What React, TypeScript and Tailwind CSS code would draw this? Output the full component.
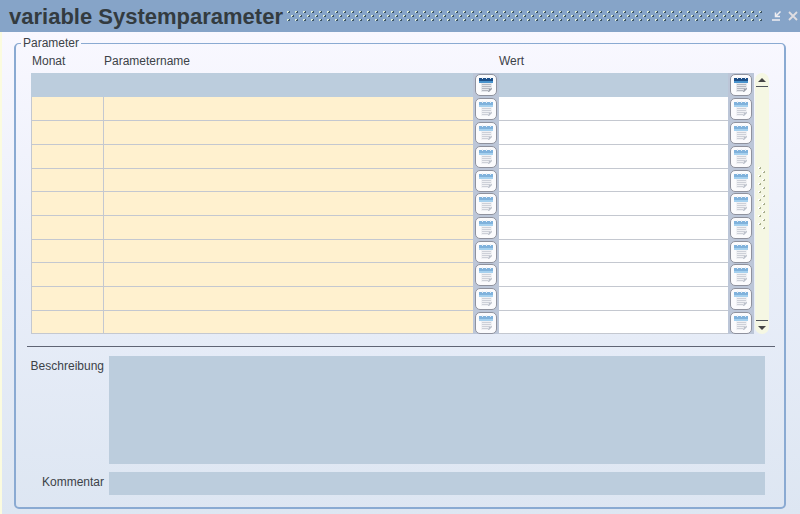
import React from 'react';

const ROW_HEIGHTS = ['h-6', 'h-6', 'h-6', 'h-6', 'h-[23px]', 'h-6', 'h-6', 'h-[23px]', 'h-6', 'h-6', 'h-[23px]'];

const Grip: React.FC<{ id: string; className: string; light: string; dark: string }> = ({
  id,
  className,
  light,
  dark,
}) => (
  <svg className={className} aria-hidden="true" shapeRendering="crispEdges">
    <defs>
      <pattern id={id} width="8" height="8" patternUnits="userSpaceOnUse">
        <path d="M0 0h2v1H1v1H0zM4 4h2v1H5v1H4z" fill={light} />
        <path d="M2 0h1v2H1V1h1zM6 4h1v2H5V5h1z" fill={dark} />
      </pattern>
    </defs>
    <rect width="100%" height="100%" fill={`url(#${id})`} />
  </svg>
);

const ListIcon: React.FC<{ active: boolean }> = ({ active }) => (
  <svg className="shrink-0" width="16" height="16" viewBox="0 0 16 16" aria-hidden="true">
    <path d="M1 1h14v5H1z" fill={active ? '#4a93cc' : '#a5d0ee'} />
    <path d="M1 1h14v3H1z" fill={active ? '#1d4f88' : '#80b2dc'} />
    <path d="M4 0h1v2H4zM8 0h1v2H8zM12 0h1v2h-1z" fill="#e6eef6" />
    <path d="M3 6h11v6l-3 3H3z" fill={active ? '#e6e8ec' : '#f0f1f4'} />
    <path
      d="M4 7.500h9M4 9.500h9M4 11.500h8M4 13.500h6"
      stroke={active ? '#b5b8c1' : '#cdd0d8'}
      fill="none"
    />
    <path d="M14 11v1l-3 3h-1l1-3z" fill={active ? '#999da8' : '#bcc1cb'} />
  </svg>
);

const ListButton: React.FC<{ label: string; active: boolean }> = ({ label, active }) => (
  <button
    type="button"
    aria-label={label}
    className="mx-auto flex h-[22px] w-[22px] items-center justify-center rounded-[5px] border border-[#8f929e] bg-[#fbfbfd]"
  >
    <ListIcon active={active} />
  </button>
);

const TitleBar: React.FC = () => (
  <header className="flex h-8 items-center bg-[#86a4c8] pr-px pl-[9px]">
    <h1 className="pt-0.5 text-[22px] leading-7 font-bold text-[#333b40]">variable Systemparameter</h1>
    <Grip id="title-grip" className="ml-1 h-[10px] min-w-0 flex-1" light="#dcebd9" dark="#3d5566" />
    <button type="button" aria-label="Minimieren" className="ml-2 p-px">
      <svg width="10" height="10" viewBox="0 0 10 10" fill="none" stroke="#efeef2">
        <path d="M8.500 0.500L4 5M3.500 1.500v4H8" strokeWidth="1.500" />
        <path d="M0 9h8" strokeWidth="1.500" />
      </svg>
    </button>
    <button type="button" aria-label="Schließen" className="ml-1 p-px">
      <svg width="10" height="10" viewBox="0 0 10 10" stroke="#dfdde2" strokeWidth="1.800">
        <path d="M1 1l8 8M9 1L1 9" />
      </svg>
    </button>
  </header>
);

const ParameterTable: React.FC = () => (
  <table className="min-w-0 flex-1 table-fixed border-collapse">
    <colgroup>
      <col className="w-[73px]" />
      <col />
      <col className="w-[26px]" />
      <col className="w-[229px]" />
      <col className="w-[26px]" />
    </colgroup>
    <thead>
      <tr className="h-[22px] text-left align-top">
        <th className="pt-0.5 pr-0 pb-1 pl-px font-normal">Monat</th>
        <th className="px-0 pt-0.5 pb-1 font-normal" colSpan={2}>Parametername</th>
        <th className="px-0 pt-0.5 pb-1 font-normal" colSpan={2}>Wert</th>
      </tr>
    </thead>
    <tbody>
      {ROW_HEIGHTS.map((height, i) => {
        const active = i === 0;
        const key = active ? 'bg-[#bccddd] border-[#bccddd]' : 'bg-[#fff1cf] border-[#c4c8d0]';
        const value = active ? 'bg-[#bccddd] border-[#bccddd]' : 'bg-white border-[#c4c8d0]';
        return (
          <tr key={i}>
            <td className="p-0">
              <input aria-label={`Monat ${i + 1}`} className={`block w-full border-r border-b border-l outline-none ${height} ${key}`} />
            </td>
            <td className="p-0">
              <input aria-label={`Parametername ${i + 1}`} className={`block w-full border-b outline-none ${height} ${key}`} />
            </td>
            <td className="bg-[#bcc6d8] p-0">
              <ListButton label={`Parameter ${i + 1} auswählen`} active={active} />
            </td>
            <td className="p-0">
              <input aria-label={`Wert ${i + 1}`} className={`block w-full border-b outline-none ${height} ${value}`} />
            </td>
            <td className="bg-[#bcc6d8] p-0">
              <ListButton label={`Wert ${i + 1} auswählen`} active={active} />
            </td>
          </tr>
        );
      })}
    </tbody>
  </table>
);

const Scrollbar: React.FC = () => (
  <div className="mt-[22px] ml-px flex w-[14px] flex-col items-center justify-between rounded-full bg-[#f5f7e3]">
    <button type="button" aria-label="Nach oben" className="flex h-[14px] w-3 items-center justify-center border-b border-[#50545a]">
      <svg width="8" height="4" viewBox="0 0 8 4"><path d="M4 0l4 4H0z" fill="#454545" /></svg>
    </button>
    <Grip id="scroll-grip" className="-mt-3 h-[62px] w-2" light="#ffffff" dark="#a9af8e" />
    <button type="button" aria-label="Nach unten" className="flex h-[14px] w-3 items-center justify-center border-t border-[#50545a]">
      <svg width="8" height="4" viewBox="0 0 8 4"><path d="M4 4l4-4H0z" fill="#454545" /></svg>
    </button>
  </div>
);

export default function App() {
  return (
    <div className="flex min-h-screen flex-col font-['Liberation_Sans',Arial,sans-serif] text-[12px] leading-4 text-[#3c4248]">
      <TitleBar />
      <main className="flex-1 border-l-2 border-[#fbfbdf] bg-linear-to-b from-[#f9f8ff] via-[#e9eef9] to-[#dde6f2] pt-[3px] pr-[14px] pb-1.5 pl-3">
        <fieldset className="min-w-0 rounded-[5px] border-2 border-t border-[#8aaad2] pr-[15px] pb-3 pl-[11px]">
          <legend className="-ml-1.5 px-0.5">Parameter</legend>
          <div className="flex pl-1">
            <ParameterTable />
            <Scrollbar />
          </div>
          <hr className="mt-3 -mr-1.5 border-[#5f6474]" />
          <div className="mt-[9px] grid grid-cols-[77px_1fr] gap-x-[5px] gap-y-2 pr-1 text-right">
            <label htmlFor="beschreibung" className="pt-0.5">Beschreibung</label>
            <textarea id="beschreibung" className="h-[108px] resize-none bg-[#bccddd] outline-none" />
            <label htmlFor="kommentar" className="pt-0.5">Kommentar</label>
            <input id="kommentar" className="h-[23px] min-w-0 bg-[#bccddd] outline-none" />
          </div>
        </fieldset>
      </main>
    </div>
  );
}
